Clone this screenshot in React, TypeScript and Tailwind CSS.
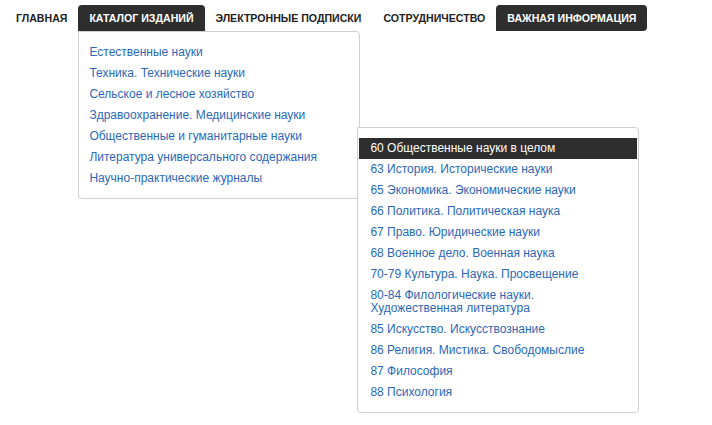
const topItems = [
  { title: "ГЛАВНАЯ", dark: false },
  { title: "КАТАЛОГ ИЗДАНИЙ", dark: true, open: true },
  { title: "ЭЛЕКТРОННЫЕ ПОДПИСКИ", dark: false },
  { title: "СОТРУДНИЧЕСТВО", dark: false },
  { title: "ВАЖНАЯ ИНФОРМАЦИЯ", dark: true },
]

const catalog = [
  "Естественные науки",
  "Техника. Технические науки",
  "Сельское и лесное хозяйство",
  "Здравоохранение. Медицинские науки",
  "Общественные и гуманитарные науки",
  "Литература универсального содержания",
  "Научно-практические журналы",
]

const social = [
  "60 Общественные науки в целом",
  "63 История. Исторические науки",
  "65 Экономика. Экономические науки",
  "66 Политика. Политическая наука",
  "67 Право. Юридические науки",
  "68 Военное дело. Военная наука",
  "70-79 Культура. Наука. Просвещение",
  "80-84 Филологические науки. Художественная литература",
  "85 Искусство. Искусствознание",
  "86 Религия. Мистика. Свободомыслие",
  "87 Философия",
  "88 Психология",
]

const SubMenu = () => {
  return (
    <ul className="absolute left-[278px] top-[95px] w-[282px] bg-white border border-[#cfcfcf] rounded-b-[4px] rounded-tr-[4px] pt-[10px] pb-[9px] px-px">
      {social.map((item, index) => (
        <li key={index}>
          <a
            className={`block pl-[11px] pr-[10px] py-[4px] leading-[13px] text-[12px] ${index === 0 ? "bg-[#2e2e2e] text-white" : "text-[#2b68b8]"}`}
          >
            {item}
          </a>
        </li>
      ))}
    </ul>
  )
}

const App = () => {
  return (
    <div className="w-[712px] h-[425px] bg-white font-['Liberation_Sans',Arial,sans-serif]">
      <ul className="flex pl-[5px] pt-[5px]">
        {topItems.map((item, index) => (
          <li key={index} className="relative shrink-0">
            <a
              className={`block px-[11px] h-[26px] leading-[26px] text-[10.6px] font-bold whitespace-nowrap ${item.dark ? "bg-[#2e2e2e] text-white rounded-t-[4px] rounded-br-[4px]" : "text-[#222]"} ${item.open ? "rounded-br-none" : ""}`}
            >
              {item.title}
            </a>
            {item.open && (
              <div className="absolute left-0 top-[26px] w-[282px] bg-white border border-[#cfcfcf] rounded-b-[4px] rounded-tr-[4px] pt-[10px] pb-[9px] z-10">
                <ul>
                  {catalog.map((c, i) => (
                    <li key={i}>
                      <a className="block pl-[10px] h-[21px] leading-[21px] text-[12px] text-[#2b68b8] whitespace-nowrap">{c}</a>
                    </li>
                  ))}
                </ul>
                <SubMenu />
              </div>
            )}
          </li>
        ))}
      </ul>
    </div>
  )
}

export default App
